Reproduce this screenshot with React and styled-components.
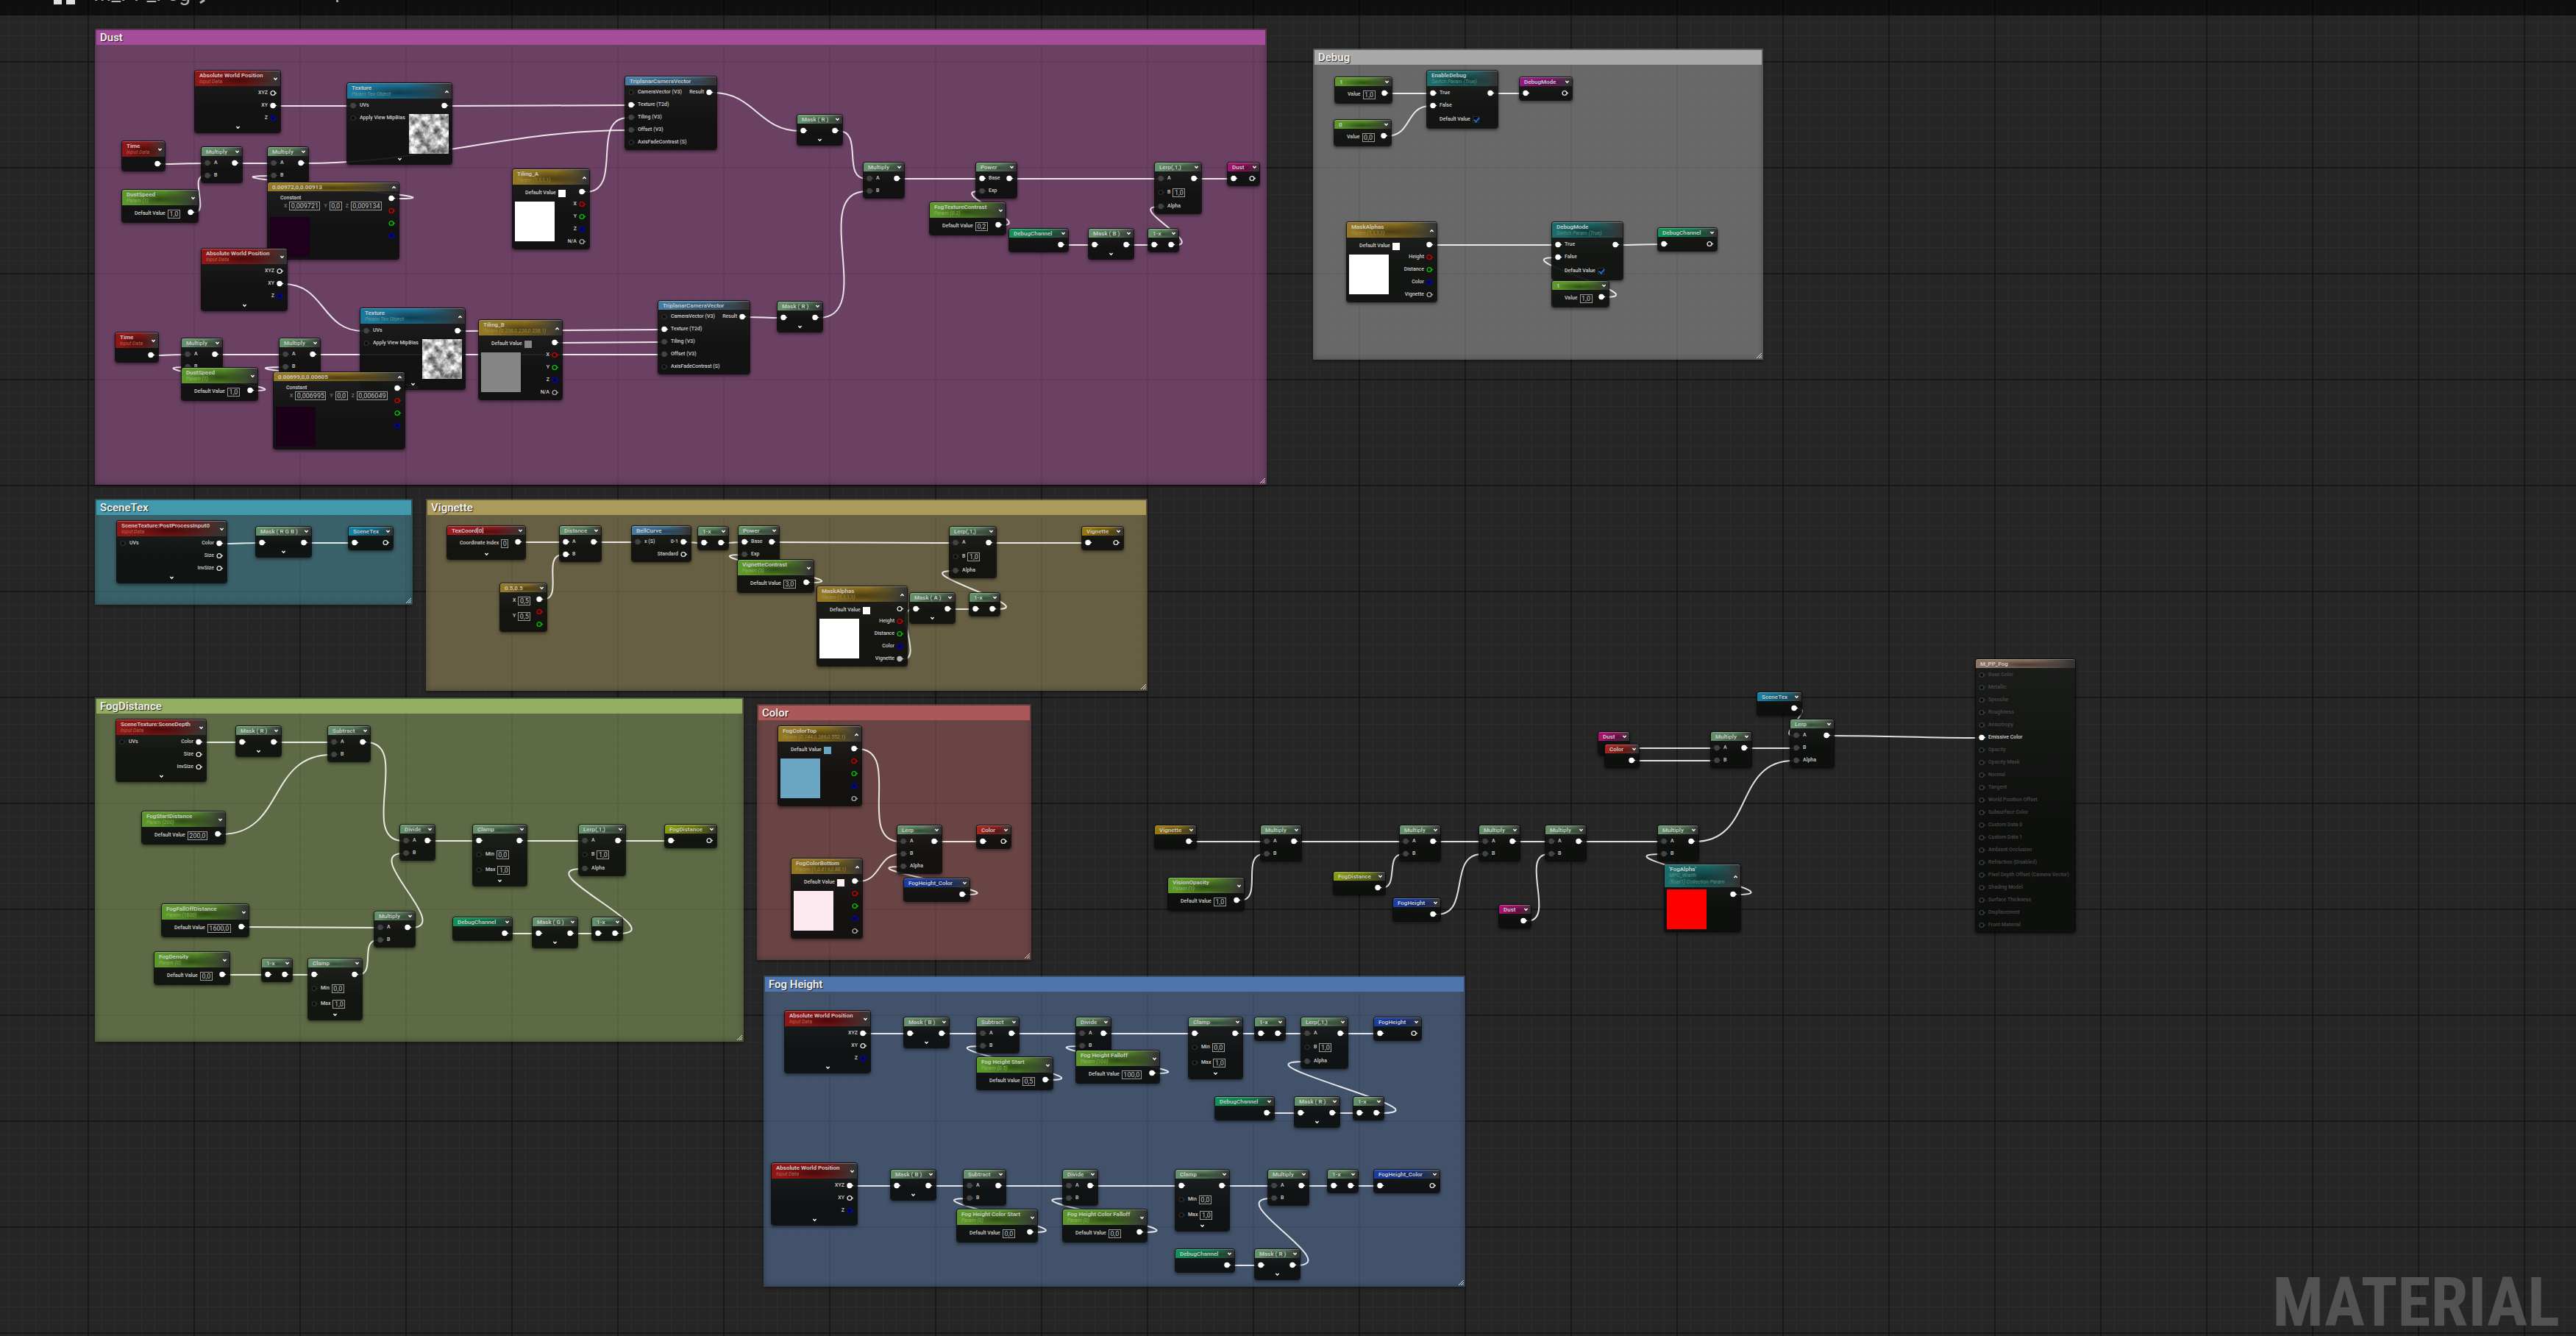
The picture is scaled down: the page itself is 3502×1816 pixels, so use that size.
import React from 'react';
import styled, { createGlobalStyle, css } from 'styled-components';

const GlobalStyle = createGlobalStyle`
  * { box-sizing: border-box; }
  body {
    margin: 0;
    background: #262626;
    font-family: Roboto, "Liberation Sans", sans-serif;
  }
`;

const Page = styled.div`
  position: relative;
  width: 100%;
  min-height: 100vh;
  overflow: hidden;
  background-color: #262626;
  background-image:
    linear-gradient(90deg, #171717 2px, transparent 2px),
    linear-gradient(#171717 2px, transparent 2px),
    linear-gradient(90deg, #2c2c2c 1px, transparent 1px),
    linear-gradient(#2c2c2c 1px, transparent 1px);
  background-size: 144px 144px, 144px 144px, 18px 18px, 18px 18px;
  background-position: 119px 0, 0 83px, 120px 0, 0 84px;
`;

const TopBar = styled.header`
  position: relative;
  z-index: 3;
  display: flex;
  align-items: flex-start;
  gap: 24px;
  height: 21px;
  padding-left: 73px;
  overflow: hidden;
  background: rgba(0, 0, 0, 0.6);
  color: #b4b4b4;
`;

const Crumb = styled.span`
  margin-top: ${(p) => (p.$raised ? -28 : -24)}px;
  font-size: 28px;
  line-height: 32px;
`;

const CrumbArrow = styled.svg`
  width: 8px;
  height: 5px;
  margin-left: -12px;
  fill: none;
  stroke: #b4b4b4;
  stroke-width: 3;
`;

const GraphIcon = styled.svg`
  width: 30px;
  height: 7px;
  fill: #e0e0e0;
`;

const Watermark = styled.div`
  position: absolute;
  right: 22px;
  bottom: 0;
  font-family: "Roboto Condensed", "Liberation Sans Narrow", Roboto, sans-serif;
  font-size: 92px;
  line-height: 90px;
  font-weight: 700;
  color: #525252;
`;

const Graph = styled.main`
  position: absolute;
  inset: 1px 0 0;
`;

const Wires = styled.svg`
  position: absolute;
  inset: 0;
  width: 100%;
  height: 100%;
  fill: none;
  stroke: rgba(255, 255, 255, 0.86);
  stroke-width: 2;
`;

/* comment boxes */

const Comment = styled.section`
  position: absolute;
  left: ${(p) => p.$x}px;
  top: ${(p) => p.$y}px;
  width: ${(p) => p.$w}px;
  height: ${(p) => p.$h}px;
  padding: 2px;
  background: rgba(${(p) => p.$body}, 0.6);
  box-shadow: inset 0 0 10px rgba(0, 0, 0, 0.3), 0 2px 4px rgba(0, 0, 0, 0.4);
`;

const CommentTitle = styled.h2`
  height: 20px;
  margin: 0;
  padding-left: 5px;
  background: ${(p) => p.$bg};
  color: #f0f0f0;
  font-size: 15px;
  line-height: 20px;
  font-weight: 600;
  text-shadow: 1px 1px 1px rgba(0, 0, 0, 0.8);
`;

const Resize = styled.svg`
  position: absolute;
  right: 2px;
  bottom: 2px;
  width: 8px;
  height: 8px;
  stroke: #e0e0e0;
`;

/* nodes */

const NodeBox = styled.article`
  position: absolute;
  left: ${(p) => p.$x}px;
  top: ${(p) => p.$y}px;
  width: ${(p) => p.$w}px;
  border: 1px solid rgba(8, 8, 8, 0.85);
  border-radius: 4px;
  background: linear-gradient(rgba(26, 28, 26, 0.92), rgba(12, 14, 12, 0.92) 60%);
  background-clip: padding-box;
  box-shadow: 0 2px 4px rgba(0, 0, 0, 0.5);
`;

const NodeHead = styled.header`
  position: relative;
  height: ${(p) => p.$h}px;
  padding: 1px 14px 0 6px;
  border-top: 1px solid rgba(255, 255, 255, 0.3);
  border-radius: 3px 3px 0 0;
  background:
    radial-gradient(ellipse 42% 60% at 50% 60%, rgba(0, 0, 0, 0.5), transparent),
    linear-gradient(100deg, ${(p) => p.$color} 55%, rgba(60, 60, 60, 0.75) 96%);
  white-space: nowrap;
`;

const NodeTitle = styled.h3`
  margin: 0;
  color: #cdcdcd;
  font-size: 8px;
  line-height: 9px;
  font-weight: 600;
`;

const NodeSub = styled.p`
  margin: 0;
  color: ${(p) => p.$color};
  font-size: 7px;
  line-height: ${(p) => (p.$tight ? 8 : 9)}px;
  font-style: italic;
`;

const Fold = styled.button`
  position: absolute;
  top: 0;
  right: 3px;
  display: flex;
  align-items: center;
  width: 7px;
  height: 100%;
  padding: 0;
  border: 0;
  background: none;
`;

const More = styled.button`
  display: flex;
  justify-content: center;
  width: 100%;
  height: 11px;
  padding: 1px 0 0;
  border: 0;
  background: none;
`;

const ArrowSvg = styled.svg`
  width: 7px;
  height: 7px;
  fill: none;
  stroke: #fff;
  stroke-width: 2;
`;

const Body = styled.div`
  display: flex;
  justify-content: space-between;
  padding: 1px 3px ${(p) => (p.$more ? 0 : 1)}px;
`;

const Column = styled.div`
  display: flex;
  flex-direction: column;
  align-items: ${(p) => (p.$right ? 'flex-end' : 'flex-start')};
  flex: 1;
  ${(p) => p.$right && css`
    position: relative;
  `}
  ${(p) => !p.$right && css`
    width: 0;
  `}
`;

const Row = styled.div`
  display: flex;
  align-items: center;
  gap: 2px;
  height: ${(p) => (p.$tall ? 21 : 17)}px;
  color: ${(p) => (p.$off ? '#484848' : '#d0d0d0')};
  font-size: 7px;
  line-height: 9px;
  font-weight: 500;
  white-space: nowrap;
`;

const PinSvg = styled.svg`
  flex: none;
  width: 12px;
  height: 9px;
`;

const PinGap = styled.span`
  flex: none;
  width: 12px;
`;

const Field = styled.label`
  display: flex;
  align-items: center;
  gap: 3px;
`;

const Value = styled.input`
  width: ${(p) => p.$w}px;
  height: 12px;
  padding: 0;
  border: 1px solid #9a9a9a;
  background: transparent;
  color: #c4c4c4;
  font: 9px/10px Roboto, sans-serif;
  text-align: center;
`;

const Check = styled.input`
  position: relative;
  appearance: none;
  width: 9px;
  height: 9px;
  margin: 0;
  border: 1px solid #2b2b2b;
  background: #0a0a0a;

  &:checked::after {
    content: '';
    position: absolute;
    left: 2px;
    top: -1px;
    width: 3px;
    height: 6px;
    border: solid #1b6fcc;
    border-width: 0 2px 2px 0;
    transform: rotate(40deg);
  }
`;

const Swatch = styled.button`
  width: 10px;
  height: 10px;
  padding: 0;
  border: 0;
  background: ${(p) => p.$bg};
`;

const Preview = styled.div`
  width: 54px;
  height: 54px;
  margin: ${(p) => p.$top}px 0 2px;
  background: ${(p) => p.$bg};
`;

const Vector = styled.div`
  padding: 4px 0 0 14px;
  color: #d0d0d0;
  font-size: 7px;
  line-height: 9px;
  font-weight: 500;
`;

const VectorFields = styled.div`
  display: flex;
  gap: 5px;
  margin-left: 5px;
  color: #777;
`;

const NoiseSvg = styled.svg`
  width: 54px;
  height: 54px;
  margin: 3px 1px 3px 0;
`;

const RED = '#8f1616';
const MATH = '#65906a';
const PARAM = '#5d972c';
const GOLD = '#947722';
const TEX = '#1d779d';
const FUNC = '#467ba0';
const SWITCH = '#1c6c6c';
const CHANNEL = '#129058';
const DUST = '#a5136c';
const SCENE = '#1580a0';
const VIG = '#97780f';
const FOGD = '#87990f';
const FOGH = '#1a3d9f';

const SUBS = { [RED]: '#b06a50', [PARAM]: '#8fb35e', [GOLD]: '#a0904e', [TEX]: '#5f9f9b', [SWITCH]: '#5f9580' };

const A = { t: 'dim', l: 'A' };
const B = { t: 'dim', l: 'B' };
const OUT = [{ t: 'full' }];

const math = (id, title, x, y, w, ins = [A, B]) => ({ id, title, x, y, w, color: MATH, fold: 'down', ins, outs: OUT });
const multiply = (id, x, y) => math(id, 'Multiply', x, y, 57);
const inverse = (id, x, y) => math(id, '1-x', x, y, 43, [{ t: 'full' }]);
const mask = (id, x, y, ch, w = 63) => ({ ...math(id, `Mask ( ${ch} )`, x, y, w, [{ t: 'full' }]), more: true });
const lerp1 = (id, x, y) => math(id, 'Lerp(,1,)', x, y, 65, [A, { t: 'none', l: 'B', v: '1,0' }, { t: 'dim', l: 'Alpha' }]);
const clamp = (id, x, y) => ({
  ...math(id, 'Clamp', x, y, 75, [{ t: 'full' }, { t: 'none', l: 'Min', v: '0,0' }, { t: 'none', l: 'Max', v: '1,0' }]),
  more: true,
});
const param = (id, title, sub, x, y, w, v) => ({
  id, title, sub: `Param (${sub})`, x, y, w, color: PARAM, fold: 'down', ins: [{ l: 'Default Value', v }], outs: OUT,
});
const scalar = (id, n, x, y) => ({ id, title: n, x, y, w: 79, color: PARAM, fold: 'down', ins: [{ l: 'Value', v: `${n},0` }], outs: OUT });
const worldPos = (id, x, y, on) => ({
  id, title: 'Absolute World Position', sub: 'Input Data', x, y, w: 118, color: RED, fold: 'down', more: true, ins: [],
  outs: [{ t: on === 0 ? 'full' : 'ring', l: 'XYZ' }, { t: on === 1 ? 'full' : 'ring', l: 'XY' }, { t: 'blue', l: 'Z' }],
});
const time = (id, x, y) => ({ id, title: 'Time', sub: 'Input Data', x, y, w: 60, color: RED, fold: 'down', ins: [], outs: OUT });
const texture = (id, x, y) => ({
  id, title: 'Texture', sub: 'Param Tex Object', x, y, w: 144, color: TEX, fold: 'up', more: true, noise: true,
  ins: [{ t: 'dim', l: 'UVs' }, { t: 'none', l: 'Apply View MipBias' }], outs: OUT,
});
const sceneTexture = (id, name, x, y, w) => ({
  id, title: `SceneTexture:${name}`, sub: 'Input Data', x, y, w, color: RED, fold: 'down', more: true,
  ins: [{ t: 'none', l: 'UVs' }], outs: [{ t: 'full', l: 'Color' }, { t: 'ring', l: 'Size' }, { t: 'ring', l: 'InvSize' }],
});
const triplanar = (id, x, y) => ({
  id, title: 'TriplanarCameraVector', x, y, w: 126, color: FUNC,
  ins: [
    { t: 'none', l: 'CameraVector (V3)' }, { t: 'full', l: 'Texture (T2d)' }, { t: 'dim', l: 'Tiling (V3)' },
    { t: 'dim', l: 'Offset (V3)' }, { t: 'none', l: 'AxisFadeContrast (S)' },
  ],
  outs: [{ t: 'full', l: 'Result' }],
});
const vec4 = (id, title, sub, x, y, w, bg, names, used = 0) => ({
  id, title, sub: `Param (${sub})`, x, y, w, color: GOLD, fold: 'up', preview: bg, ins: [{ l: 'Default Value', swatch: bg }],
  outs: ['', ...names].map((l, i) => {
    const kinds = ['ring', 'red', 'green', 'blue', 'gray'];
    return { l, t: i === used ? (i ? 'graytip' : 'full') : kinds[i] };
  }),
});
const vec3 = (id, title, x, y, vector, bg) => ({
  id, title, x, y, w: 180, color: GOLD, fold: 'up', vector, preview: bg, ins: [],
  outs: [{ t: 'full' }, { t: 'red' }, { t: 'green' }, { t: 'blue' }],
});
const switchParam = (id, title, x, y) => ({
  id, title, sub: 'Switch Param (True)', x, y, w: 98, color: SWITCH,
  ins: [{ t: 'full', l: 'True' }, { t: 'full', l: 'False' }, { l: 'Default Value', check: true }], outs: OUT,
});
const declare = (id, title, x, y, w, color) => ({ id, title, x, y, w, color, fold: 'down', ins: [{ t: 'full' }], outs: [{ t: 'ring' }] });
const usage = (id, title, x, y, w, color) => ({ id, title, x, y, w, color, fold: 'down', ins: [], outs: OUT });

const XYZW = ['X', 'Y', 'Z', 'N/A'];
const ALPHAS = ['Height', 'Distance', 'Color', 'Vignette'];

const RESULT_PINS = [
  'Base Color', 'Metallic', 'Specular', 'Roughness', 'Anisotropy', 'Emissive Color', 'Opacity', 'Opacity Mask', 'Normal',
  'Tangent', 'World Position Offset', 'Subsurface Color', 'Custom Data 0', 'Custom Data 1', 'Ambient Occlusion',
  'Refraction (Disabled)', 'Pixel Depth Offset (Camera Vector)', 'Shading Model', 'Surface Thickness', 'Displacement',
  'Front Material',
];

const NODES = [
  // Dust
  worldPos('absA', 264, 94, 1),
  time('timeA', 165, 190),
  multiply('mulA1', 273, 198),
  multiply('mulA2', 363, 198),
  texture('texA', 471, 111),
  param('speedA', 'DustSpeed', '1', 165, 256, 105, '1,0'),
  vec3('constA', '0.00972,0,0.00913', 363, 246, ['0,009721', '0,0', '0,009134'], '#1f001c'),
  worldPos('absB', 273, 336, 1),
  time('timeB', 156, 450),
  multiply('mulB1', 246, 458),
  multiply('mulB2', 379, 458),
  texture('texB', 489, 417),
  param('speedB', 'DustSpeed', '1', 246, 498, 105, '1,0'),
  vec3('constB', '0.00699,0,0.00605', 371, 504, ['0,006995', '0,0', '0,006049'], '#1b0018'),
  vec4('tilingA', 'Tiling_A', '1,1,1,1', 696, 228, 106, '#fff', XYZW),
  vec4('tilingB', 'Tiling_B', '0.238,0.238,0.238,1', 650, 433, 115, '#868686', XYZW),
  triplanar('triA', 849, 102),
  triplanar('triB', 894, 407),
  mask('maskA', 1083, 154, 'R'),
  mask('maskB', 1056, 408, 'R'),
  multiply('mulC', 1173, 219),
  math('powA', 'Power', 1326, 219, 57, [{ t: 'full', l: 'Base' }, { t: 'dim', l: 'Exp' }]),
  param('texContrast', 'FogTextureContrast', '0.2', 1263, 273, 105, '0,2'),
  lerp1('lerpA', 1569, 219),
  usage('chA', 'DebugChannel', 1371, 309, 82, CHANNEL),
  mask('maskC', 1479, 309, 'B'),
  inverse('invA', 1560, 309),
  declare('dustOut', 'Dust', 1668, 219, 45, DUST),

  // Debug
  scalar('one', '1', 1814, 103),
  scalar('zero', '0', 1813, 161),
  switchParam('enable', 'EnableDebug', 1939, 94),
  declare('modeOut', 'DebugMode', 2065, 103, 73, '#8f1a82'),
  vec4('alphas', 'MaskAlphas', '1,1,1,1', 1830, 300, 124, '#fff', ALPHAS),
  switchParam('mode', 'DebugMode', 2109, 300),
  scalar('oneB', '1', 2109, 380),
  declare('chOut', 'DebugChannel', 2253, 308, 82, CHANNEL),

  // SceneTex
  sceneTexture('post', 'PostProcessInput0', 158, 706, 151),
  mask('maskRGB', 347, 714, 'R G B', 77),
  declare('sceneOut', 'SceneTex', 473, 714, 62, SCENE),

  // Vignette
  {
    id: 'coord', title: 'TexCoord[0]', x: 607, y: 713, w: 108, color: '#a01a1e', fold: 'down', more: true,
    ins: [{ l: 'Coordinate Index', v: '0' }], outs: OUT,
  },
  math('dist', 'Distance', 760, 713, 58, [{ t: 'full', l: 'A' }, { t: 'full', l: 'B' }]),
  {
    id: 'vec2', title: '0.5,0.5', x: 679, y: 791, w: 65, color: GOLD, fold: 'down',
    ins: [{ l: 'X', v: '0,5' }, { l: 'Y', v: '0,5' }], outs: [{ t: 'full' }, { t: 'red' }, { t: 'green' }],
  },
  {
    id: 'bell', title: 'BellCurve', x: 858, y: 713, w: 82, color: FUNC,
    ins: [{ t: 'dim', l: 'x (S)' }], outs: [{ t: 'full', l: '0-1' }, { t: 'ring', l: 'Standard' }],
  },
  inverse('invB', 948, 714),
  math('powB', 'Power', 1003, 713, 57, [{ t: 'full', l: 'Base' }, { t: 'dim', l: 'Exp' }]),
  param('vigContrast', 'VignetteContrast', '3', 1002, 759, 105, '3,0'),
  vec4('alphasB', 'MaskAlphas', '1,1,1,1', 1110, 795, 124, '#fff', ALPHAS, 4),
  mask('maskV', 1236, 804, 'A'),
  lerp1('lerpV', 1290, 714),
  inverse('invV', 1317, 804),
  declare('vigOut', 'Vignette', 1470, 714, 58, VIG),

  // FogDistance
  sceneTexture('depth', 'SceneDepth', 157, 976, 124),
  mask('maskD', 320, 985, 'R'),
  math('subD', 'Subtract', 445, 985, 59),
  param('fogStart', 'FogStartDistance', '200', 192, 1101, 115, '200,0'),
  math('divD', 'Divide', 543, 1119, 49),
  clamp('clampD', 642, 1119),
  lerp1('lerpD', 786, 1119),
  declare('fogDOut', 'FogDistance', 903, 1119, 72, FOGD),
  param('fogFall', 'FogFallOffDistance', '1600', 219, 1227, 120, '1600,0'),
  multiply('mulD', 508, 1237),
  param('density', 'FogDensity', '0', 209, 1292, 104, '0,0'),
  inverse('invD', 355, 1301),
  clamp('clampE', 418, 1301),
  usage('chD', 'DebugChannel', 615, 1245, 82, CHANNEL),
  mask('maskG', 723, 1245, 'G'),
  inverse('invE', 804, 1245),

  // Color
  vec4('colTop', 'FogColorTop', '0.144,0.386,0.552,1', 1057, 985, 115, '#6ba5c4', ['', '', '', '']),
  vec4('colBottom', 'FogColorBottom', '1,0.819,0.88,1', 1075, 1165, 98, '#ffe9f0', ['', '', '', '']),
  math('lerpC', 'Lerp', 1219, 1120, 62, [A, B, { t: 'dim', l: 'Alpha' }]),
  usage('heightCol', 'FogHeight_Color', 1228, 1192, 91, FOGH),
  declare('colOut', 'Color', 1327, 1120, 48, '#a2261f'),

  // Fog Height
  worldPos('absH', 1066, 1372, 0),
  mask('maskH', 1228, 1381, 'B'),
  math('subH', 'Subtract', 1327, 1381, 59),
  param('startH', 'Fog Height Start', '0.5', 1327, 1435, 105, '0,5'),
  math('divH', 'Divide', 1462, 1381, 49),
  param('fallH', 'Fog Height Falloff', '100', 1462, 1426, 115, '100,0'),
  clamp('clampH', 1615, 1381),
  inverse('invH', 1705, 1381),
  lerp1('lerpH', 1768, 1381),
  declare('fogHOut', 'FogHeight', 1867, 1381, 66, FOGH),
  usage('chH', 'DebugChannel', 1651, 1489, 82, CHANNEL),
  mask('maskI', 1759, 1489, 'R'),
  inverse('invI', 1839, 1489),
  worldPos('absI', 1048, 1579, 0),
  mask('maskJ', 1210, 1588, 'B'),
  math('subI', 'Subtract', 1309, 1588, 59),
  param('startI', 'Fog Height Color Start', '0', 1300, 1642, 111, '0,0'),
  math('divI', 'Divide', 1444, 1588, 49),
  param('fallI', 'Fog Height Color Falloff', '0', 1444, 1642, 116, '0,0'),
  clamp('clampI', 1597, 1588),
  multiply('mulI', 1723, 1588),
  inverse('invJ', 1804, 1588),
  declare('fogCOut', 'FogHeight_Color', 1867, 1588, 91, FOGH),
  usage('chI', 'DebugChannel', 1597, 1696, 82, CHANNEL),
  mask('maskK', 1705, 1696, 'R'),

  // final chain
  usage('vigUse', 'Vignette', 1569, 1120, 58, VIG),
  multiply('m1', 1713, 1120),
  param('vision', 'VisionOpacity', '1', 1587, 1191, 105, '1,0'),
  multiply('m2', 1902, 1120),
  usage('fogDUse', 'FogDistance', 1812, 1183, 72, FOGD),
  multiply('m3', 2010, 1120),
  usage('fogHUse', 'FogHeight', 1893, 1219, 66, FOGH),
  multiply('m4', 2100, 1120),
  usage('dustUse', 'Dust', 2037, 1228, 45, DUST),
  multiply('m5', 2253, 1120),
  {
    id: 'fogAlpha', title: "'FogAlpha'", sub: 'MPC_Wraith', sub2: '(float1) Collection Param', x: 2262, y: 1173, w: 105,
    color: SWITCH, fold: 'up', preview: '#f00', previewTop: 2, ins: [], outs: OUT,
  },
  usage('dustB', 'Dust', 2172, 993, 44, DUST),
  usage('colUse', 'Color', 2181, 1010, 48, '#a2261f'),
  multiply('m6', 2325, 993),
  usage('sceneUse', 'SceneTex', 2388, 939, 62, SCENE),
  math('lerpM', 'Lerp', 2433, 976, 61, [A, B, { t: 'dim', l: 'Alpha' }]),
  {
    id: 'result', title: 'M_PP_Fog', x: 2685, y: 894, w: 137, color: '#8c7463', outs: [],
    ins: RESULT_PINS.map((l) => (l === 'Emissive Color' ? { t: 'full', l } : { t: 'off', l, off: true })),
  },
];

// [from node, output index, to node, input index]
const LINKS = [
  ['absA', 1, 'texA', 0], ['timeA', 0, 'mulA1', 0], ['speedA', 0, 'mulA1', 1], ['mulA1', 0, 'mulA2', 0],
  ['constA', 0, 'mulA2', 1], ['mulA2', 0, 'triA', 3], ['texA', 0, 'triA', 1], ['tilingA', 0, 'triA', 2],
  ['absB', 1, 'texB', 0], ['timeB', 0, 'mulB1', 0], ['speedB', 0, 'mulB1', 1], ['mulB1', 0, 'mulB2', 0],
  ['constB', 0, 'mulB2', 1], ['mulB2', 0, 'triB', 3], ['texB', 0, 'triB', 1], ['tilingB', 0, 'triB', 2],
  ['triA', 0, 'maskA', 0], ['triB', 0, 'maskB', 0], ['maskA', 0, 'mulC', 0], ['maskB', 0, 'mulC', 1],
  ['mulC', 0, 'powA', 0], ['texContrast', 0, 'powA', 1], ['powA', 0, 'lerpA', 0], ['chA', 0, 'maskC', 0],
  ['maskC', 0, 'invA', 0], ['invA', 0, 'lerpA', 2], ['lerpA', 0, 'dustOut', 0],
  ['one', 0, 'enable', 0], ['zero', 0, 'enable', 1], ['enable', 0, 'modeOut', 0], ['alphas', 0, 'mode', 0],
  ['oneB', 0, 'mode', 1], ['mode', 0, 'chOut', 0],
  ['post', 0, 'maskRGB', 0], ['maskRGB', 0, 'sceneOut', 0],
  ['coord', 0, 'dist', 0], ['vec2', 0, 'dist', 1], ['dist', 0, 'bell', 0], ['bell', 0, 'invB', 0], ['invB', 0, 'powB', 0],
  ['vigContrast', 0, 'powB', 1], ['powB', 0, 'lerpV', 0], ['alphasB', 4, 'maskV', 0], ['maskV', 0, 'invV', 0],
  ['invV', 0, 'lerpV', 2], ['lerpV', 0, 'vigOut', 0],
  ['depth', 0, 'maskD', 0], ['maskD', 0, 'subD', 0], ['fogStart', 0, 'subD', 1], ['subD', 0, 'divD', 0],
  ['divD', 0, 'clampD', 0], ['clampD', 0, 'lerpD', 0], ['lerpD', 0, 'fogDOut', 0], ['fogFall', 0, 'mulD', 0],
  ['density', 0, 'invD', 0], ['invD', 0, 'clampE', 0], ['clampE', 0, 'mulD', 1], ['mulD', 0, 'divD', 1],
  ['chD', 0, 'maskG', 0], ['maskG', 0, 'invE', 0], ['invE', 0, 'lerpD', 2],
  ['colTop', 0, 'lerpC', 0], ['colBottom', 0, 'lerpC', 1], ['heightCol', 0, 'lerpC', 2], ['lerpC', 0, 'colOut', 0],
  ['absH', 0, 'maskH', 0], ['maskH', 0, 'subH', 0], ['startH', 0, 'subH', 1], ['subH', 0, 'divH', 0],
  ['fallH', 0, 'divH', 1], ['divH', 0, 'clampH', 0], ['clampH', 0, 'invH', 0], ['invH', 0, 'lerpH', 0],
  ['lerpH', 0, 'fogHOut', 0], ['chH', 0, 'maskI', 0], ['maskI', 0, 'invI', 0], ['invI', 0, 'lerpH', 2],
  ['absI', 0, 'maskJ', 0], ['maskJ', 0, 'subI', 0], ['startI', 0, 'subI', 1], ['subI', 0, 'divI', 0],
  ['fallI', 0, 'divI', 1], ['divI', 0, 'clampI', 0], ['clampI', 0, 'mulI', 0], ['mulI', 0, 'invJ', 0],
  ['invJ', 0, 'fogCOut', 0], ['chI', 0, 'maskK', 0], ['maskK', 0, 'mulI', 1],
  ['vigUse', 0, 'm1', 0], ['vision', 0, 'm1', 1], ['m1', 0, 'm2', 0], ['fogDUse', 0, 'm2', 1], ['m2', 0, 'm3', 0],
  ['fogHUse', 0, 'm3', 1], ['m3', 0, 'm4', 0], ['dustUse', 0, 'm4', 1], ['m4', 0, 'm5', 0], ['fogAlpha', 0, 'm5', 1],
  ['m5', 0, 'lerpM', 2], ['dustB', 0, 'm6', 0], ['colUse', 0, 'm6', 1], ['m6', 0, 'lerpM', 1],
  ['sceneUse', 0, 'lerpM', 0], ['lerpM', 0, 'result', 5],
];

const COMMENTS = [
  { title: 'Dust', x: 129, y: 39, w: 1593, h: 620, bg: '#a54c9a', body: '151, 83, 140' },
  { title: 'Debug', x: 1785, y: 66, w: 612, h: 423, bg: '#a9a9a9', body: '148, 148, 148' },
  { title: 'SceneTex', x: 129, y: 678, w: 432, h: 144, bg: '#4299ad', body: '72, 135, 150' },
  { title: 'Vignette', x: 579, y: 678, w: 981, h: 261, bg: '#ab9a5c', body: '147, 133, 87' },
  { title: 'FogDistance', x: 129, y: 948, w: 882, h: 468, bg: '#93ad62', body: '130, 152, 90' },
  { title: 'Color', x: 1029, y: 957, w: 373, h: 348, bg: '#ad5858', body: '150, 88, 88' },
  { title: 'Fog Height', x: 1038, y: 1326, w: 954, h: 423, bg: '#4f76ac', body: '85, 112, 152' },
];

const byId = Object.fromEntries(NODES.map((n) => [n.id, n]));
const isTall = (pin) => Boolean(pin.v || pin.swatch || pin.check);
const headHeight = (n) => (n.sub2 ? 31 : n.sub ? 21 : 12);

function pinPoint(node, side, index) {
  const list = side === 'in' ? node.ins : node.outs;
  let y = node.y + headHeight(node) + 2;
  for (let i = 0; i < index; i += 1) y += isTall(list[i]) ? 21 : 17;
  y += isTall(list[index]) ? 11 : 9;
  return side === 'in' ? [node.x + 5, y] : [node.x + node.w - 6, y];
}

function wirePath([from, out, to, inp]) {
  const [x1, y1] = pinPoint(byId[from], 'out', out);
  const [x2, y2] = pinPoint(byId[to], 'in', inp);
  const dx = Math.abs(x2 - x1);
  const dy = Math.abs(y2 - y1);
  const t = x2 >= x1 ? (dx + dy) / 3 : (2 * dx + 1.5 * dy) / 3;
  return `M${x1} ${y1}C${x1 + t} ${y1} ${x2 - t} ${y2} ${x2} ${y2}`;
}

const RINGS = {
  ring: '#e4e4e4', red: '#d40000', green: '#00c800', blue: '#0000d8', gray: '#a8a8a8', none: '#2e2e2e', off: '#3c3c3c',
};
const FILLS = { full: '#fff', dim: '#434343', graytip: '#b4b4b4' };

const Pin = ({ type }) => (
  <PinSvg viewBox="0 0 12 9">
    {FILLS[type] ? (
      <>
        <circle cx="5" cy="4.5" r="3.7" fill={FILLS[type]} />
        <path d="M7 2.5L10.5 4.5L7 6.5Z" fill={FILLS[type]} />
      </>
    ) : (
      <>
        <circle cx="5" cy="4.5" r="2.9" fill="#0a0a0a" stroke={RINGS[type]} strokeWidth="1.4" />
        <path d="M8.4 3L10.4 4.5L8.4 6Z" fill={RINGS[type]} />
      </>
    )}
  </PinSvg>
);

const Arrow = ({ up }) => (
  <ArrowSvg viewBox="0 0 10 10">
    <path d={up ? 'M2 7L5 4L8 7' : 'M2 3L5 6L8 3'} />
  </ArrowSvg>
);

const boxWidth = (v) => [...v].reduce((sum, c) => sum + (c === ',' ? 2 : 5), 5);

const InRow = ({ pin }) => (
  <Row $tall={isTall(pin)} $off={pin.off}>
    {pin.t ? <Pin type={pin.t} /> : <PinGap />}
    {isTall(pin) ? (
      <Field>
        {pin.l}
        {pin.v && <Value type="text" defaultValue={pin.v} $w={boxWidth(pin.v)} />}
        {pin.check && <Check type="checkbox" defaultChecked />}
        {pin.swatch && <Swatch type="button" aria-label="Pick color" $bg={pin.swatch} />}
      </Field>
    ) : pin.l}
  </Row>
);

const Noise = () => (
  <NoiseSvg viewBox="0 0 54 54">
    <filter id="clouds" x="0" y="0" width="100%" height="100%" colorInterpolationFilters="sRGB">
      <feTurbulence type="fractalNoise" baseFrequency="0.09" numOctaves="5" seed="7" />
      <feColorMatrix values="1.5 0 0 0 -0.06  1.5 0 0 0 -0.06  1.5 0 0 0 -0.06  0 0 0 0 1" />
    </filter>
    <rect width="54" height="54" filter="url(#clouds)" />
  </NoiseSvg>
);

const GraphNode = ({ node }) => (
  <NodeBox $x={node.x} $y={node.y} $w={node.w}>
    <NodeHead $h={headHeight(node)} $color={node.color}>
      <NodeTitle>{node.title}</NodeTitle>
      {node.sub && <NodeSub $color={SUBS[node.color]}>{node.sub}</NodeSub>}
      {node.sub2 && <NodeSub $tight $color={SUBS[node.color]}>{node.sub2}</NodeSub>}
      {node.fold && <Fold type="button" aria-label="Toggle preview"><Arrow up={node.fold === 'up'} /></Fold>}
    </NodeHead>
    <Body $more={node.more}>
      <Column>
        {node.vector && (
          <Vector>
            Constant
            <VectorFields>
              {node.vector.map((v, i) => (
                <Field key={v + i}>
                  {'XYZ'[i]}
                  <Value type="text" defaultValue={v} $w={boxWidth(v)} />
                </Field>
              ))}
            </VectorFields>
          </Vector>
        )}
        {node.ins.map((pin, i) => <InRow key={i} pin={pin} />)}
        {node.preview && <Preview $bg={node.preview} $top={node.vector ? 9 : node.previewTop || 1} />}
      </Column>
      <Column $right>
        {node.outs.map((pin, i) => (
          <Row key={i}>{pin.l}<Pin type={pin.t} /></Row>
        ))}
        {node.noise && <Noise />}
      </Column>
    </Body>
    {node.more && <More type="button" aria-label="Show more pins"><Arrow /></More>}
  </NodeBox>
);

export default function App() {
  return (
    <Page>
      <GlobalStyle />
      <TopBar>
        <GraphIcon viewBox="0 0 30 7">
          <path d="M0 0H11V6H0ZM17 0H29V6H17Z" />
        </GraphIcon>
        <Crumb>M_PP_Fog</Crumb>
        <CrumbArrow viewBox="0 0 8 5">
          <path d="M7 0L1 4" />
        </CrumbArrow>
        <Crumb $raised>Material Graph</Crumb>
      </TopBar>
      {COMMENTS.map((c) => (
        <Comment key={c.title} $x={c.x} $y={c.y} $w={c.w} $h={c.h} $body={c.body}>
          <CommentTitle $bg={c.bg}>{c.title}</CommentTitle>
          <Resize viewBox="0 0 8 8">
            <path d="M1 8L8 1M4 8L8 4M6.5 8L8 6.5" />
          </Resize>
        </Comment>
      ))}
      <Graph>
        <Wires>
          {LINKS.map((link) => <path key={link.join('-')} d={wirePath(link)} />)}
        </Wires>
        {NODES.map((node) => <GraphNode key={node.id} node={node} />)}
      </Graph>
      <Watermark>MATERIAL</Watermark>
    </Page>
  );
}
